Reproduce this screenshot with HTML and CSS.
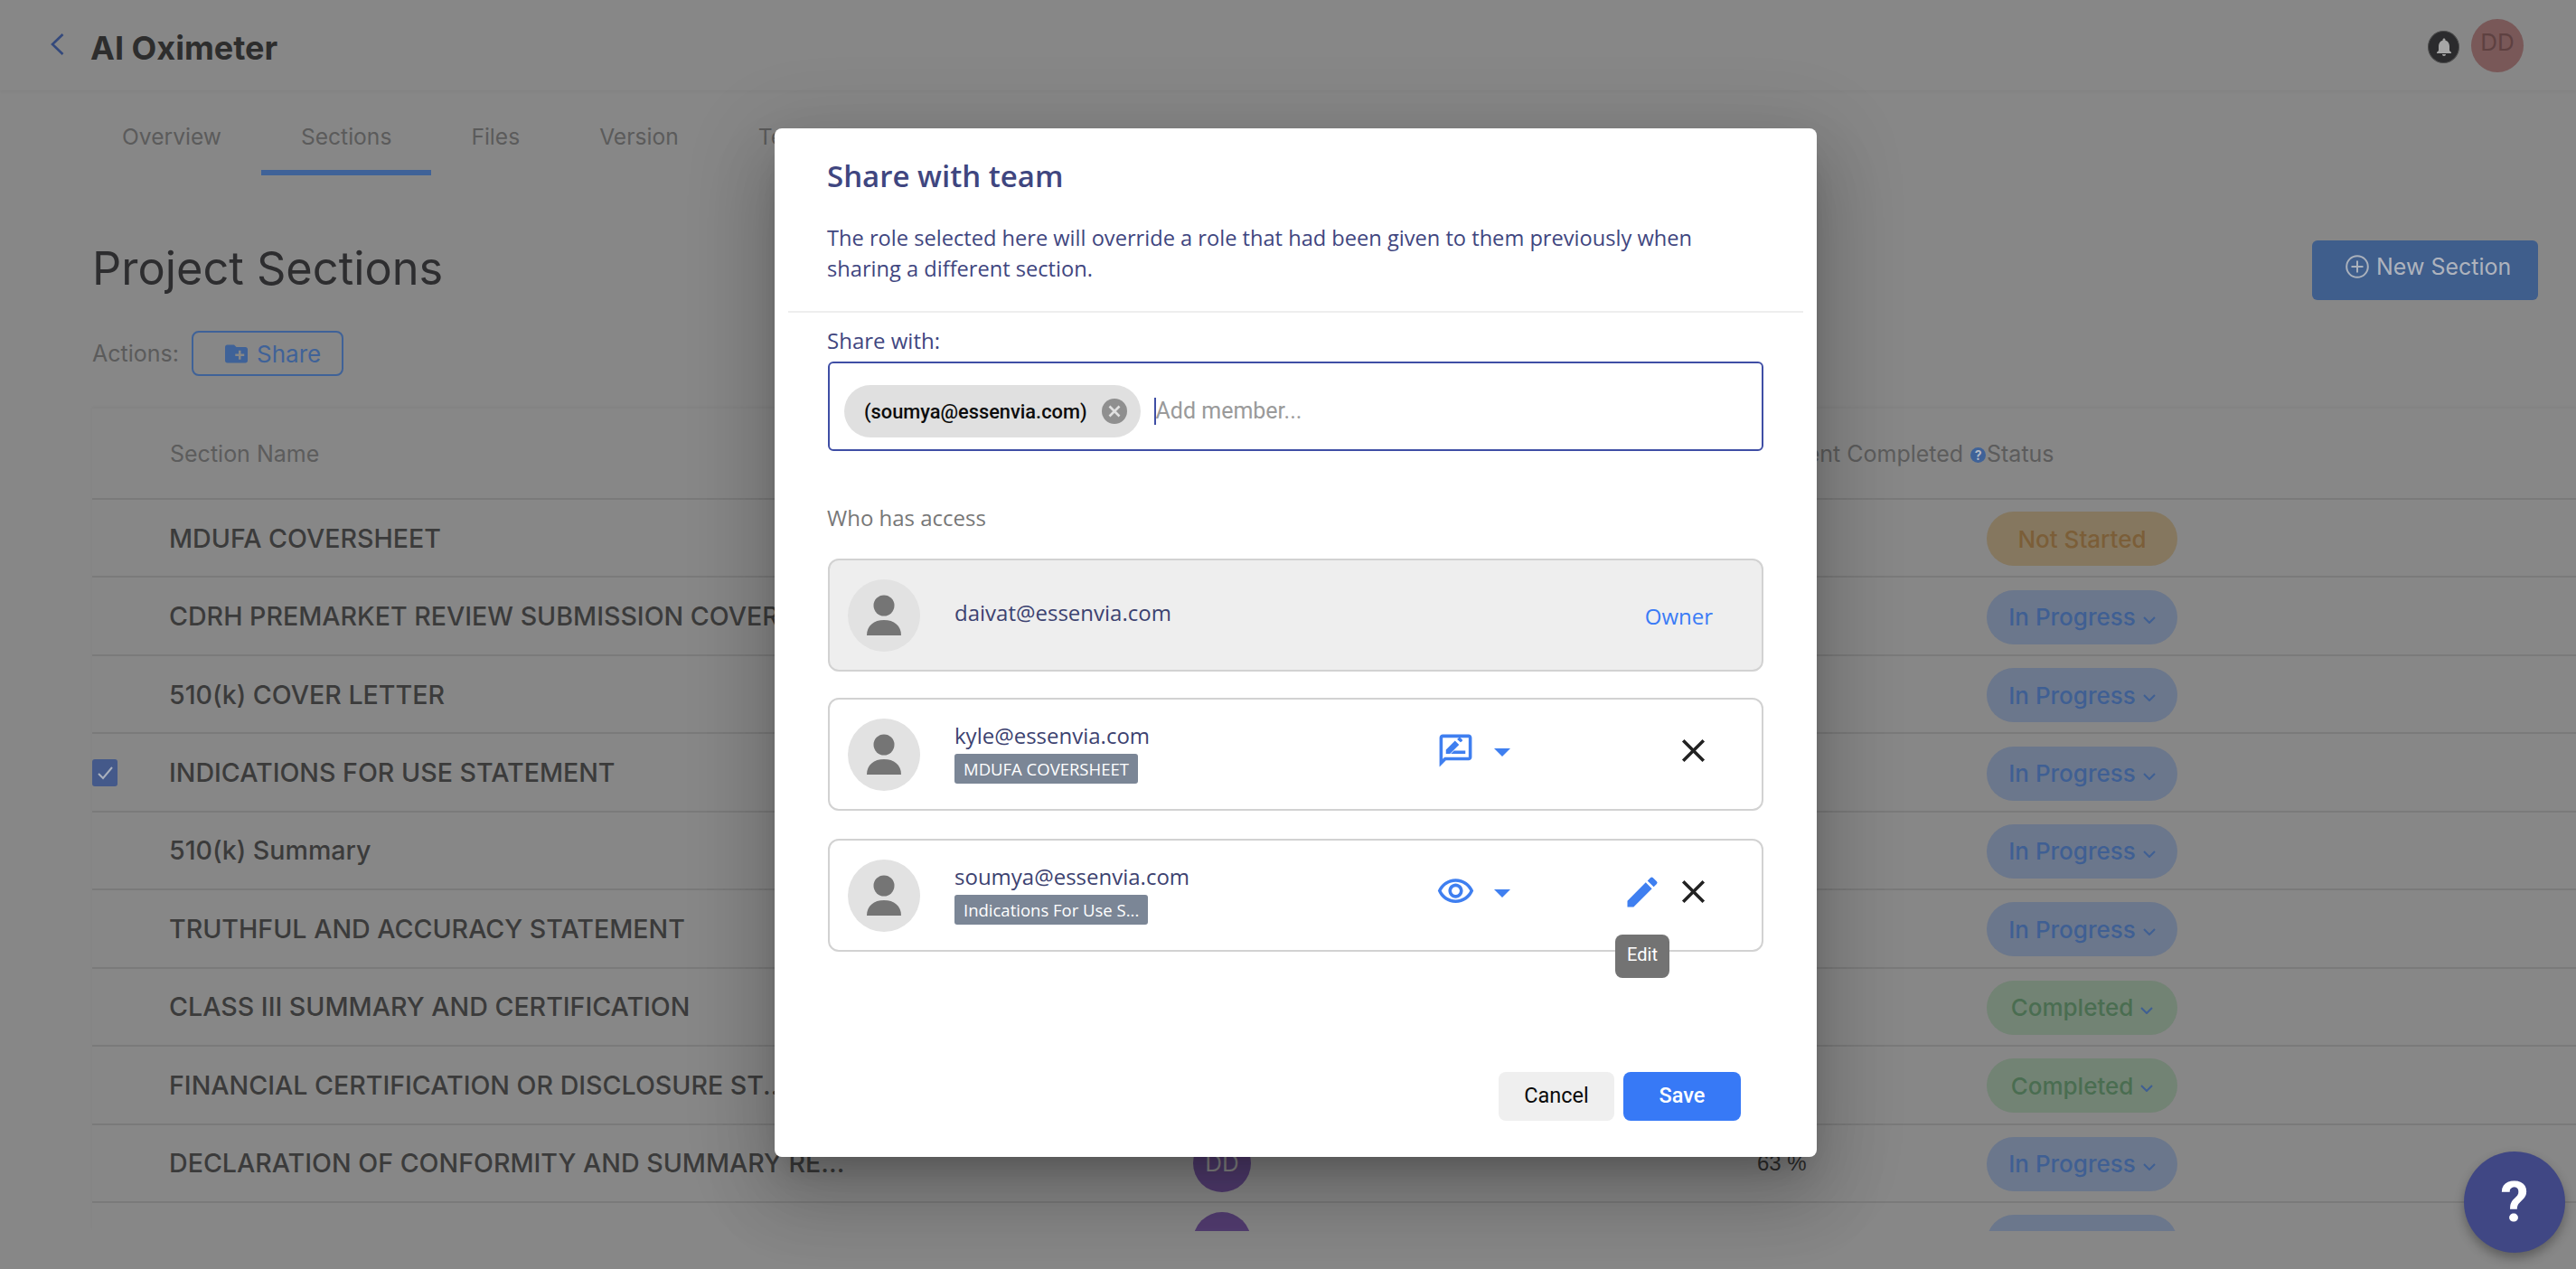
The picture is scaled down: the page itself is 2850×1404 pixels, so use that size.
FILE: index.html
```html
<!DOCTYPE html>
<html lang="en">
<head>
<meta charset="utf-8">
<title>AI Oximeter - Project Sections</title>
<link rel="stylesheet" href="styles.css">
</head>
<body>
<div class="app">
  <header class="topbar">
    <div class="topbar-left">
      <svg class="back" viewBox="0 0 15 24"><path d="M13.500 1 2 12l11.500 11" fill="none" stroke="#34497c" stroke-width="2.600"/></svg>
      <h1 class="project">AI Oximeter</h1>
    </div>
    <div class="topbar-right">
      <span class="bell"><svg viewBox="0 0 24 24"><path d="M12 22c1.100 0 2-.9 2-2h-4c0 1.100.9 2 2 2zm6-6v-5c0-3.070-1.640-5.640-4.500-6.320V4c0-.83-.67-1.500-1.500-1.500s-1.500.67-1.500 1.500v.68C7.630 5.360 6 7.920 6 11v5l-2 2v1h16v-1l-2-2z"/></svg></span>
      <span class="me">DD</span>
    </div>
  </header>

  <nav class="tabs">
    <span class="tab">Overview</span>
    <span class="tab tab-active">Sections</span>
    <span class="tab">Files</span>
    <span class="tab">Version</span>
    <span class="tab">Team</span>
  </nav>

  <main class="content">
    <div class="title-row">
      <h2 class="page-title">Project Sections</h2>
      <span class="new-section">
        <svg viewBox="0 0 26 26"><circle cx="13" cy="13" r="11.800" fill="none" stroke="#aab1bc" stroke-width="2"/><path d="M13 6.500v13M6.500 13h13" stroke="#aab1bc" stroke-width="2"/></svg>
        New Section
      </span>
    </div>
    <div class="actions">
      <span class="actions-label">Actions:</span>
      <span class="share-btn">
        <svg viewBox="2 4 20 16"><path fill="#3f6298" d="M20 6h-8l-2-2H4c-1.110 0-1.990.89-1.990 2L2 18c0 1.110.89 2 2 2h16c1.110 0 2-.89 2-2V8c0-1.110-.89-2-2-2zm-1 8h-3v3h-2v-3h-3v-2h3V9h2v3h3v2z"/></svg>
        Share
      </span>
    </div>

    <div class="table">
      <div class="row row-head">
        <span></span>
        <span class="head-cell">Section Name</span>
        <span class="head-cell">Assigned To</span>
        <span class="head-cell head-pct">Percent Completed<i class="hint">?</i></span>
        <span class="head-cell">Status</span>
      </div>
      <div class="row"><span></span><span class="name">MDUFA COVERSHEET</span><span></span><span></span><span class="pill pill-orange">Not Started</span></div>
      <div class="row"><span></span><span class="name">CDRH PREMARKET REVIEW SUBMISSION COVERSHEET</span><span></span><span></span><span class="pill pill-blue">In Progress<svg class="chev" viewBox="0 0 14 8"><path d="m1 1 6 6 6-6"/></svg></span></div>
      <div class="row"><span></span><span class="name">510(k) COVER LETTER</span><span></span><span></span><span class="pill pill-blue">In Progress<svg class="chev" viewBox="0 0 14 8"><path d="m1 1 6 6 6-6"/></svg></span></div>
      <div class="row"><span class="checkbox"><svg viewBox="0 0 28 30"><path d="m7 16 5 5 10-12" fill="none" stroke="#a9b0bd" stroke-width="2"/></svg></span><span class="name">INDICATIONS FOR USE STATEMENT</span><span></span><span></span><span class="pill pill-blue">In Progress<svg class="chev" viewBox="0 0 14 8"><path d="m1 1 6 6 6-6"/></svg></span></div>
      <div class="row"><span></span><span class="name">510(k) Summary</span><span></span><span></span><span class="pill pill-blue">In Progress<svg class="chev" viewBox="0 0 14 8"><path d="m1 1 6 6 6-6"/></svg></span></div>
      <div class="row"><span></span><span class="name">TRUTHFUL AND ACCURACY STATEMENT</span><span></span><span></span><span class="pill pill-blue">In Progress<svg class="chev" viewBox="0 0 14 8"><path d="m1 1 6 6 6-6"/></svg></span></div>
      <div class="row"><span></span><span class="name">CLASS III SUMMARY AND CERTIFICATION</span><span></span><span></span><span class="pill pill-green">Completed<svg class="chev" viewBox="0 0 14 8"><path d="m1 1 6 6 6-6"/></svg></span></div>
      <div class="row"><span></span><span class="name">FINANCIAL CERTIFICATION OR DISCLOSURE ST...</span><span></span><span></span><span class="pill pill-green">Completed<svg class="chev" viewBox="0 0 14 8"><path d="m1 1 6 6 6-6"/></svg></span></div>
      <div class="row"><span></span><span class="name">DECLARATION OF CONFORMITY AND SUMMARY RE...</span><span class="owner">DD</span><span class="pct">63 %</span><span class="pill pill-blue">In Progress<svg class="chev" viewBox="0 0 14 8"><path d="m1 1 6 6 6-6"/></svg></span></div>
      <div class="row"><span></span><span class="name"></span><span class="owner"></span><span></span><span class="pill pill-blue"></span></div>
    </div>
  </main>
</div>

<section class="modal">
  <div class="modal-head">
    <h3 class="modal-title">Share with team</h3>
    <p class="modal-desc">The role selected here will override a role that had been given to them previously when sharing a different section.</p>
  </div>
  <div class="modal-rule"></div>
  <div class="modal-body">
    <div class="share-label">Share with:</div>
    <div class="share-input">
      <span class="chip">(soumya@essenvia.com)
        <svg class="chip-x" viewBox="0 0 28 28"><circle cx="14" cy="14" r="14" fill="#8f8f8f"/><path d="m8.500 8.500 11 11m0-11-11 11" stroke="#e0e0e0" stroke-width="2.600"/></svg>
      </span>
      <span class="placeholder">Add member...</span>
    </div>
    <div class="access-label">Who has access</div>

    <div class="member member-owner">
      <span class="avatar"><svg viewBox="0 0 80 80"><circle cx="40" cy="29" r="11.500"/><path d="M21 62c0-11 8-17 19-17s19 6 19 17z"/></svg></span>
      <div class="info"><div class="email">daivat@essenvia.com</div></div>
      <span class="owner-label">Owner</span>
    </div>

    <div class="member">
      <span class="avatar"><svg viewBox="0 0 80 80"><circle cx="40" cy="29" r="11.500"/><path d="M21 62c0-11 8-17 19-17s19 6 19 17z"/></svg></span>
      <div class="info">
        <div class="email">kyle@essenvia.com</div>
        <span class="tag">MDUFA COVERSHEET</span>
      </div>
      <div class="role">
        <svg class="icon-blue" viewBox="0 0 24 24"><path d="M20 2H4c-1.100 0-2 .9-2 2v18l4-4h14c1.100 0 2-.9 2-2V4c0-1.100-.9-2-2-2zm0 14H5.170L4 17.170V4h16v12z"/><path d="M6 14h2.500l5.600-5.600-2.500-2.500L6 11.500V14zM15 6.900 12.900 5l1-1c.3-.3.7-.3 1 0l1.100 1.100c.3.3.3.7 0 1zM11 12h7v2h-9z"/></svg>
        <svg class="caret" viewBox="0 0 18 9"><path d="M0 0h18L9 9z"/></svg>
      </div>
      <span class="edit-slot"></span>
      <svg class="close" viewBox="0 0 24 24"><path d="M19 6.410 17.590 5 12 10.590 6.410 5 5 6.410 10.590 12 5 17.590 6.410 19 12 13.410 17.590 19 19 17.590 13.410 12z"/></svg>
    </div>

    <div class="member member-view">
      <span class="avatar"><svg viewBox="0 0 80 80"><circle cx="40" cy="29" r="11.500"/><path d="M21 62c0-11 8-17 19-17s19 6 19 17z"/></svg></span>
      <div class="info">
        <div class="email">soumya@essenvia.com</div>
        <span class="tag">Indications For Use S...</span>
      </div>
      <div class="role">
        <svg class="icon-blue" viewBox="0 0 24 24"><path d="M12 6c3.790 0 7.170 2.130 8.820 5.500C19.170 14.870 15.790 17 12 17s-7.170-2.130-8.820-5.500C4.830 8.130 8.210 6 12 6m0-2C7 4 2.730 7.110 1 11.500 2.730 15.890 7 19 12 19s9.270-3.110 11-7.500C21.270 7.110 17 4 12 4zm0 5c1.380 0 2.500 1.120 2.500 2.500S13.380 14 12 14s-2.500-1.120-2.500-2.500S10.620 9 12 9m0-2c-2.480 0-4.500 2.020-4.500 4.500S9.520 16 12 16s4.500-2.020 4.500-4.500S14.480 7 12 7z"/></svg>
        <svg class="caret" viewBox="0 0 18 9"><path d="M0 0h18L9 9z"/></svg>
      </div>
      <span class="edit-slot">
        <svg class="icon-blue" viewBox="0 0 24 24"><path d="M3 17.250V21h3.750L17.810 9.940l-3.750-3.750L3 17.250zM20.710 7.040a.996.996 0 0 0 0-1.410l-2.340-2.340a.996.996 0 0 0-1.410 0l-1.830 1.830 3.750 3.750 1.830-1.830z"/></svg>
        <span class="tooltip">Edit</span>
      </span>
      <svg class="close" viewBox="0 0 24 24"><path d="M19 6.410 17.590 5 12 10.590 6.410 5 5 6.410 10.590 12 5 17.590 6.410 19 12 13.410 17.590 19 19 17.590 13.410 12z"/></svg>
    </div>
  </div>
  <div class="modal-foot">
    <span class="btn btn-cancel">Cancel</span>
    <span class="btn btn-save">Save</span>
  </div>
</section>

<span class="help">?</span>
</body>
</html>
```

FILE: styles.css
```css
* { box-sizing: border-box; }
html, body { margin: 0; padding: 0; }
body {
  width: 2850px;
  height: 1404px;
  overflow: hidden;
  position: relative;
  background: #878787;
  font-family: "Inter", "Liberation Sans", sans-serif;
  color: #5a5a5a;
}
.app { width: 2850px; height: 1404px; overflow: hidden; }

/* top bar */
.topbar {
  height: 100px;
  display: flex;
  align-items: center;
  justify-content: space-between;
  padding: 0 58px 0 56px;
  box-shadow: 0 2px 3px rgba(0, 0, 0, .03);
}
.topbar-left { display: flex; align-items: center; }
.back { width: 15px; height: 24px; margin-right: 29px; margin-top: -3px; }
.project { margin: 6px 0 0; font-size: 36px; font-weight: 700; color: #2d2d2d; line-height: 44px; }
.topbar-right { display: flex; align-items: center; gap: 13px; }
.bell {
  width: 35px; height: 36px; border-radius: 50%;
  background: #2b2b2d; border: 1px solid #4c4c4c;
  display: flex; align-items: center; justify-content: center;
  margin-top: 3px;
}
.bell svg { width: 24px; height: 24px; fill: #a6a6a6; }
.me {
  width: 58px; height: 59px; border-radius: 50%;
  background: #795858; color: #5e4141;
  font-size: 26px; text-align: center; line-height: 52px;
}

/* tabs */
.tabs { display: flex; padding-left: 91px; height: 94px; }
.tab {
  padding: 0 44px; height: 94px; line-height: 102px;
  font-size: 24.600px; color: #5b5b5b;
  border-bottom: 6px solid transparent;
}
.tab-active { border-bottom-color: #3f6298; }

/* page */
.content { padding: 0 42px 0 102px; }
.title-row { display: flex; justify-content: space-between; align-items: flex-start; padding-top: 72px; height: 172px; }
.page-title { margin: 0; font-size: 50.500px; font-weight: 400; line-height: 62px; color: #2d2d2f; }
.new-section {
  width: 250px; height: 66px; background: #3f5e8c; border-radius: 6px;
  display: flex; align-items: center; gap: 8px; padding: 0 0 8px 37px;
  font-size: 25px; line-height: 34px; color: #aeb3bd;
}
.new-section svg { width: 26px; height: 26px; flex: none; }
.actions { display: flex; align-items: center; height: 50px; }
.actions-label { font-size: 25px; color: #5b5b5b; width: 110px; }
.share-btn {
  width: 168px; height: 50px;
  border: 2px solid #3f6298; border-radius: 8px;
  display: flex; align-items: center; padding-left: 35px; gap: 10px;
  font-size: 26px; color: #3f6298;
}
.share-btn svg { width: 25px; height: 21px; }

/* table */
.table { margin-right: -42px; margin-top: 36px; height: 910px; overflow: hidden; box-shadow: 0 -2px 3px rgba(0, 0, 0, .03); }
.row {
  display: grid;
  grid-template-columns: 86px 1132px 620px 258px 1fr;
  align-items: center;
  height: 86.440px;
  border-bottom: 2px solid #7a7a7a;
}
.row-head { height: 101px; }
.head-cell { font-size: 25px; color: #5c5c5c; white-space: nowrap; }
.head-pct { display: flex; align-items: center; padding-left: 5px; }
.hint {
  width: 17px; height: 17px; border-radius: 50%;
  margin: 3px 0 0 8px; background: #3f6298; color: #b4bac5;
  font-size: 14px; font-weight: 700; font-style: normal; text-align: center; line-height: 17px;
}
.name { font-size: 28.600px; font-weight: 500; color: #3b3b3b; white-space: nowrap; overflow: hidden; margin: 1px 280px 0 -1px; line-height: 36px; }
.checkbox { width: 28px; height: 30px; background: #44598a; border-radius: 3px; display: block; }
.checkbox svg { display: block; width: 28px; height: 30px; }
.owner {
  width: 64px; height: 64px; border-radius: 50%;
  background: #523c70; color: #8a8a8a;
  font-size: 26px; text-align: center; line-height: 64px;
}
.pct { font-family: "Liberation Sans", sans-serif; font-size: 24px; color: #2e2e2e; padding-left: 4px; }
.pill {
  width: 211px; height: 60px; border-radius: 30px; margin-top: 2px;
  display: flex; align-items: center; justify-content: center; gap: 8px;
  font-size: 26px; font-weight: 500; white-space: nowrap;
}
.pill-orange { background: #85775f; color: #7b5e38; }
.pill-blue { background: #6b778c; color: #3f5f93; }
.pill-green { background: #728374; color: #4a6d51; }
.chev { width: 14px; height: 8px; margin-top: 6px; fill: none; stroke: #3f5f93; stroke-width: 2; }

/* modal */
.modal {
  position: absolute;
  left: 857px; top: 142px;
  width: 1153px; height: 1138px;
  background: #fff;
  border-radius: 8px;
  display: flex;
  flex-direction: column;
  font-family: "Open Sans", "Liberation Sans", sans-serif;
  box-shadow: 0 22px 30px -14px rgba(0, 0, 0, .2), 0 48px 76px 6px rgba(0, 0, 0, .14), 0 18px 92px 16px rgba(0, 0, 0, .12);
}
.modal-head { padding: 30px 58px 30px; }
.modal-title { margin: 0; font-size: 33px; font-weight: 600; line-height: 46px; color: #3f4680; }
.modal-desc { margin: 28px 0 0; font-size: 23.640px; line-height: 34px; color: #3f4680; width: 1000px; }
.modal-rule { height: 2px; margin: 0 15px; background: #eeeeee; }
.modal-body { padding: 15px 59px 0; }
.share-label { font-size: 24px; line-height: 32px; color: #3f4680; margin-left: -1px; }
.share-input {
  margin-top: 7px; height: 99px; width: 1035px;
  border: 2px solid #3f4ea5; border-radius: 6px;
  display: flex; align-items: center; padding: 11px 0 0 16px;
}
.chip {
  height: 58px; border-radius: 29px; background: #e0e0e0;
  display: flex; align-items: center;
  padding: 0 15px 0 22px;
  font-family: "Roboto", sans-serif; font-size: 21.800px; font-weight: 500; color: #0c0c0c;
}
.chip-x { width: 28px; height: 28px; margin-left: 16px; }
.placeholder {
  margin-left: 15px;
  border-left: 2px solid #3f4ea5;
  font-family: "Roboto", sans-serif; font-size: 25px; line-height: 30px; color: #9a9a9a;
}
.access-label { margin-top: 57px; font-size: 24px; line-height: 34px; color: #777; margin-left: -1px; }

.member {
  margin-top: 29px; height: 125px; width: 1035px;
  border: 2px solid #d2d2d2; border-radius: 12px;
  display: flex; align-items: center;
  padding: 0 54px 0 20px;
}
.access-label + .member { margin-top: 28px; }
.member-owner { background: #eeeeee; }
.member-view { margin-top: 31px; }
.avatar { width: 80px; height: 80px; border-radius: 50%; background: #e2e2e2; flex: none; margin-right: 38px; }
.avatar svg { display: block; width: 80px; height: 80px; fill: #757575; }
.info { flex: 1; margin-bottom: 6px; display: flex; flex-direction: column; align-items: flex-start; }
.email { font-size: 24px; line-height: 34px; color: #3c4270; }
.tag {
  margin-top: 3px; height: 33px; padding: 0 10px;
  border-radius: 3px; background: #7b8696; color: #fff;
  font-size: 18.500px; line-height: 33px;
}
.owner-label { font-size: 24px; color: #3a7bf6; margin-top: 1px; }
.role { width: 206px; display: flex; align-items: center; margin-bottom: 8px; }
.icon-blue { width: 43px; height: 43px; fill: #3f7ff0; display: block; }
.caret { width: 18px; height: 9px; margin-left: 21px; margin-top: 3px; fill: #3f7ff0; }
.edit-slot { width: 44px; height: 44px; position: relative; margin-bottom: 8px; margin-right: 13px; }
.edit-slot .icon-blue { width: 44px; height: 44px; }
.close { width: 43px; height: 43px; fill: #222; margin-bottom: 8px; }
.tooltip {
  position: absolute; left: -8px; top: 69px;
  width: 60px; height: 48px; border-radius: 8px;
  background: #737373; color: #fff;
  font-family: "Roboto", sans-serif; font-size: 20px; line-height: 45px; text-align: center;
}

.modal-foot { margin-top: auto; padding: 0 84px 40px 0; display: flex; justify-content: flex-end; gap: 10px; }
.btn {
  height: 54px; border-radius: 8px;
  font-family: "Roboto", sans-serif; font-size: 23.500px; line-height: 52px; text-align: center;
}
.btn-cancel { width: 128px; background: #efefef; color: #0a0a0a; }
.btn-save { width: 130px; background: #3779f6; color: #fff; font-weight: 500; }

/* help */
.help {
  position: absolute; left: 2726px; top: 1274px;
  width: 112px; height: 112px; border-radius: 50%;
  background: #404784; color: #fff;
  font-family: "Roboto", sans-serif; font-size: 62px; font-weight: 700; text-align: center; line-height: 112px;
  box-shadow: 0 6px 12px rgba(0, 0, 0, .3);
}
```
